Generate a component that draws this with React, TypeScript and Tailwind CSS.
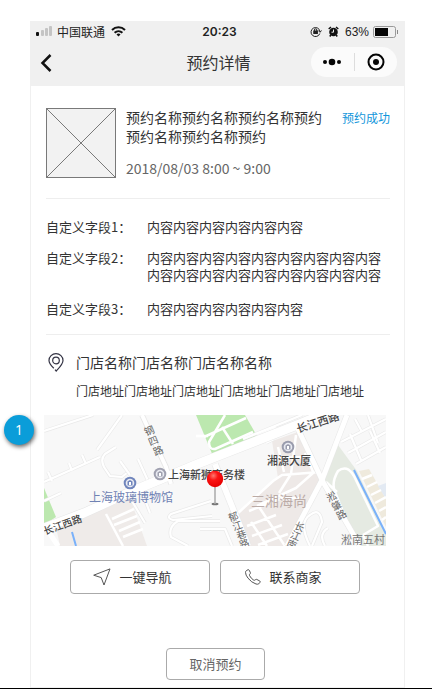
import type { ReactNode } from "react";

const fields = [
  { label: "自定义字段1：", value: "内容内容内容内容内容内容", space: "mb-3.5" },
  {
    label: "自定义字段2：",
    value: "内容内容内容内容内容内容内容内容内容内容内容内容内容内容内容内容内容内容",
    space: "mb-[17px]",
  },
  { label: "自定义字段3：", value: "内容内容内容内容内容内容", space: "" },
];

function StatusBar() {
  return (
    <div className="grid h-[21px] grid-cols-3 items-center pl-1.5 pr-1.5 text-xs text-[#222]">
      <div className="flex items-center">
        <svg className="mr-1 shrink-0" width="17" height="11" viewBox="0 0 17 11" aria-hidden="true">
          <rect x="0" y="6" width="3" height="4" rx="1" fill="#111" />
          <rect x="5" y="4" width="3" height="6" rx="1" fill="#c4c4c4" />
          <rect x="9" y="2" width="3" height="8" rx="1" fill="#c4c4c4" />
          <rect x="13" y="0" width="3" height="10" rx="1" fill="#c4c4c4" />
        </svg>
        <span className="whitespace-nowrap">中国联通</span>
        <svg className="ml-1.5 shrink-0" width="15" height="11" viewBox="0 0 15 11" fill="none" stroke="#111" strokeWidth="2" aria-hidden="true">
          <path d="M1 4C4.600.400 10.400.400 14 4" />
          <path d="M3.600 6.700C5.800 4.600 9.200 4.600 11.400 6.700" />
          <path d="M5.500 8.400C6.600 7.300 8.400 7.300 9.500 8.400L7.500 10.500Z" fill="#111" stroke="none" />
        </svg>
      </div>
      <div className="pl-1 text-center font-['Inter',sans-serif] font-semibold">20:23</div>
      <div className="flex items-center justify-end font-['Liberation_Sans',sans-serif] whitespace-nowrap">
        <svg className="mr-1.5 shrink-0" width="12" height="11" viewBox="0 0 12 11" fill="none" stroke="#222" aria-hidden="true">
          <path d="M9.800 7.500A4.500 4.500 0 1 1 10 5.500M8.300 4.500L10 6.300L11.500 4.500" />
          <path d="M4.400 5V4A1.200 1.200 0 0 1 6.800 4V5" />
          <rect x="3.800" y="5" width="3.600" height="2.500" fill="#222" />
        </svg>
        <svg className="mr-1.5 shrink-0" width="11" height="11" viewBox="0 0 11 11" aria-hidden="true">
          <circle cx="5.500" cy="6" r="4.300" fill="#111" />
          <path d="M.700 3L3 1M10.300 3L8 1M2.800 9L1.800 10.500M8.200 9L9.200 10.500" stroke="#111" strokeWidth="1.500" />
          <path d="M5.500 3.500V6.200H3.500" stroke="#eee" fill="none" />
        </svg>
        <span>63%</span>
        <svg className="ml-1 shrink-0" width="26" height="12" viewBox="0 0 26 12" aria-hidden="true">
          <rect x="0.500" y="0.500" width="22" height="11" rx="2" fill="none" stroke="#999" />
          <rect x="2" y="2" width="13" height="8" fill="#050505" />
          <path d="M24.500 4V8" stroke="#888" />
        </svg>
      </div>
    </div>
  );
}

function NavBar() {
  return (
    <div className="grid h-11 grid-cols-3 items-center pl-2.5 pr-2">
      <button type="button" aria-label="返回" className="flex h-7 w-7 items-center">
        <svg width="12" height="20" viewBox="0 0 12 20" fill="none" stroke="#111" strokeWidth="2.500" aria-hidden="true">
          <path d="M10.500 1L2.500 9L10.500 17" />
        </svg>
      </button>
      <h1 className="pb-1 text-center text-base text-[#333]">预约详情</h1>
      <div className="mb-1 flex h-[30px] w-[86px] items-center justify-self-end rounded-full bg-[#fbfbfb]">
        <button type="button" aria-label="更多" className="flex flex-1 justify-center">
          <svg width="20" height="8" viewBox="0 0 20 8" fill="#050505" aria-hidden="true">
            <circle cx="3" cy="4" r="2" />
            <circle cx="10" cy="4" r="3.300" />
            <circle cx="17" cy="4" r="2" />
          </svg>
        </button>
        <span className="h-[18px] w-px bg-[#ddd]" />
        <button type="button" aria-label="关闭" className="flex flex-1 justify-center">
          <svg width="18" height="18" viewBox="0 0 18 18" aria-hidden="true">
            <circle cx="9" cy="9" r="7.500" fill="none" stroke="#050505" strokeWidth="2" />
            <circle cx="9" cy="9" r="3" fill="#050505" />
          </svg>
        </button>
      </div>
    </div>
  );
}

function MinorRoads({ children }: { children: string }) {
  return (
    <>
      <path d={children} stroke="#e9e9e9" strokeWidth="3.500" />
      <path d={children} stroke="#fff" strokeWidth="2.200" />
    </>
  );
}

function Poi({ x, y, color }: { x: number; y: number; color: string }) {
  return (
    <g>
      <circle cx={x} cy={y} r="6.300" fill={color} />
      <circle cx={x} cy={y} r="4.300" fill="#e9ebf2" />
      <path d={`M${x - 2.5} ${y + 2.5}v-4l2.500-1.500l2.500 1.500v4z`} fill={color} />
      <path d={`M${x - 1} ${y + 2}v-3h2v3z`} fill="#fff" />
    </g>
  );
}

function Glyph({ x, y, turn, children }: { x: number; y: number; turn: number; children: ReactNode }) {
  return (
    <text x={x} y={y} fontSize="10" fill="#666" textAnchor="middle" dominantBaseline="central" transform={`rotate(${turn} ${x} ${y})`}>
      {children}
    </text>
  );
}

function StoreMap() {
  return (
    <svg
      className="block h-[131px] w-full"
      viewBox="0 0 342 131"
      preserveAspectRatio="xMidYMid slice"
      role="img"
      aria-label="门店地图"
      fill="none"
      strokeLinejoin="round"
    >
      <defs>
        <radialGradient id="pin" cx="0.400" cy="0.300" r="0.700">
          <stop offset="0" stopColor="#ff7a70" />
          <stop offset="0.400" stopColor="#fb1414" />
          <stop offset="1" stopColor="#e60000" />
        </radialGradient>
      </defs>
      <rect width="342" height="131" fill="#f8f8f8" />
      <path d="M152 0H201L213 21L169 41Z" fill="#bce8af" />
      <path d="M0 73L12 102L0 110Z" fill="#bce8af" />
      <path d="M12 112L60 94L86 83L103 131H16Z" fill="#efebe9" />
      <path d="M228 26L254 17L278 62L246 131H204L193 99L234 63Z" fill="#eee9e7" />
      <path d="M294 30L313 56L342 118V131H316L280 66Z" fill="#e5eae2" />
      <path d="M315 56L325 54L342 84V112Z" fill="#efeadd" />
      <path d="M334 71L342 68V84Z" fill="#e3eaf3" />

      <MinorRoads>M0 16L49 0M53 35L78 0</MinorRoads>
      <MinorRoads>M0 67L56 42M4 57L8 66M25 48L28 56M38 40L42 49</MinorRoads>
      <MinorRoads>M72 32L61 39Q56 44 60 52L66 61L78 62L84 57M0 86L17 78M94 44L105 68</MinorRoads>
      <MinorRoads>M85 81L101 108M98 77L106 98M76 46L86 60</MinorRoads>
      <MinorRoads>M167 86L127 99Q122 103 129 105L168 101M176 106H134Q124 112 127 122L144 131M156 114H181L188 131</MinorRoads>
      <MinorRoads>M199 24L258 0M213 21L232 13M222 28L230 24</MinorRoads>
      <MinorRoads>M266 131Q254 107 266 100Q276 92 278 107L268 131M281 131Q274 119 284 113</MinorRoads>
      <MinorRoads>M297 27L342 4M304 38L342 17M312 49L342 32M311 4L318 17M324 0L334 28M306 19L317 45M326 16L336 38</MinorRoads>
      <g stroke="#fff" strokeWidth="2.500">
        <path d="M181 0L165 27Q165 35 171 34L209 17M160 22L202 3M178 12L189 29M152 21H164" />
        <path d="M62 99L79 131M68 104L90 94M70 110L93 101M75 116L96 107M79 122L99 114" />
        <path d="M193 99L229 66L238 60L276 57M234 32L240 57M229 43L264 42M252 20L247 59L235 78M269 58L252 73L213 91M205 96L238 83L257 83M207 107L223 131M215 92L241 131M203 111L232 100M208 121L238 110M214 130L244 119M261 38L270 59" />
        <path d="M313 131L291 77Q287 68 294 56Q303 49 310 61L334 111L319 120M293 77L282 67M319 120L324 131" />
        <path d="M318 64L328 60M323 72L333 67M327 80L337 75M331 88L342 82M335 96L342 92M338 105L342 102" />
      </g>
      <g stroke="#e6e6e6">
        <path d="M98 0L122 52L127 69" strokeWidth="5.500" />
        <path d="M171 49L204 131" strokeWidth="7" />
        <path d="M303 0L278 65L243 131" strokeWidth="6" />
        <path d="M253 12L279 67L316 131" strokeWidth="6" />
        <path d="M0 113L40 98L86 77L156 48L253 10L282 -2" strokeWidth="10" />
      </g>
      <g stroke="#fff">
        <path d="M98 0L122 52L127 69" strokeWidth="4" />
        <path d="M0 110L14 131" strokeWidth="5" />
        <path d="M171 49L204 131" strokeWidth="6" />
        <path d="M303 0L278 65L243 131" strokeWidth="5" />
        <path d="M253 12L279 67L316 131" strokeWidth="5" />
        <path d="M0 113L40 98L86 77L156 48L253 10L282 -2" strokeWidth="9" />
      </g>
      <path d="M28 117L32 131M310 55L342 119" stroke="#79b1fa" strokeWidth="2" />

      <Poi x={86} y={68} color="#7085bc" />
      <Poi x={116} y={59} color="#a0a1b0" />
      <Poi x={244} y={32} color="#9a9cad" />

      <Glyph x={105} y={15} turn={-22}>钢</Glyph>
      <Glyph x={109} y={25} turn={-22}>四</Glyph>
      <Glyph x={114} y={35} turn={-22}>路</Glyph>
      <Glyph x={189} y={101} turn={-18}>郁</Glyph>
      <Glyph x={193} y={110} turn={-18}>江</Glyph>
      <Glyph x={197} y={119} turn={-18}>巷</Glyph>
      <Glyph x={200} y={128} turn={-18}>路</Glyph>
      <Glyph x={256} y={111} turn={24}>长</Glyph>
      <Glyph x={252} y={120} turn={24}>江</Glyph>
      <Glyph x={248} y={129} turn={24}>南</Glyph>
      <Glyph x={287} y={81} turn={-28}>淞</Glyph>
      <Glyph x={292} y={90} turn={-28}>肇</Glyph>
      <Glyph x={297} y={99} turn={-28}>路</Glyph>

      <g fontSize="11" fontWeight="500" fill="#444">
        <text x="1" y="120" fontSize="10" transform="rotate(-20 1 120)">长江西路</text>
        <text x="254" y="18" transform="rotate(-18 254 18)">长江西路</text>
        <text x="124" y="64">上海新狮商务楼</text>
        <text x="223" y="50">湘源大厦</text>
        <text x="45" y="87" fontSize="12" fontWeight="400" fill="#7082b4">上海玻璃博物馆</text>
        <text x="207" y="91" fontSize="14" fontWeight="400" fill="#bbaca7">三湘海尚</text>
        <text x="297" y="129" fontWeight="400" fill="#777">淞南五村</text>
      </g>

      <ellipse cx="171" cy="89" rx="3.500" ry="1.300" fill="#777" />
      <path d="M171 70V89" stroke="#aaa" strokeWidth="1.500" />
      <circle cx="171" cy="64" r="8.200" fill="url(#pin)" />
    </svg>
  );
}

export default function App() {
  return (
    <div className="border-b border-black bg-white pt-[21px] pr-[27px] pl-[30px] font-['Noto_Sans_CJK_SC',sans-serif] text-[#333]">
      <header className="bg-[#f0f0f0]">
        <StatusBar />
        <NavBar />
      </header>
      <main className="border-x border-b border-[#f0f0f0] px-[13px] pt-[22px] pb-[7px]">
        <section className="mr-px ml-0.5 flex items-start border-b border-[#eee] pb-5">
          <svg className="mr-2.5 shrink-0" width="70" height="70" viewBox="0 0 70 70" role="img" aria-label="预约图片">
            <rect x="0.500" y="0.500" width="69" height="69" fill="#f2f2f2" stroke="#797979" />
            <path d="M1 1L69 69M69 1L1 69" stroke="#797979" />
          </svg>
          <div className="min-w-0 flex-1">
            <h2 className="text-sm leading-[19px]">预约名称预约名称预约名称预约预约名称预约名称预约</h2>
            <p className="mt-[13px] text-sm leading-[19px] text-[#666]">2018/08/03 8:00 ~ 9:00</p>
          </div>
          <span className="ml-4 text-xs leading-[19px] whitespace-nowrap text-[#1296db]">预约成功</span>
        </section>

        <dl className="mr-px ml-0.5 border-b border-[#eee] pt-[19px] pb-[17px] text-[13px] leading-[17px]">
          {fields.map((f) => (
            <div key={f.label} className={`flex ${f.space}`}>
              <dt className="w-[101px] shrink-0 whitespace-nowrap">{f.label}</dt>
              <dd className="min-w-0 flex-1 pr-2">{f.value}</dd>
            </div>
          ))}
        </dl>

        <section className="mt-[17px] ml-0.5 flex">
          <svg className="mt-px ml-0.5 shrink-0" width="16" height="20" viewBox="0 0 16 20" fill="none" stroke="#333344" strokeWidth="1.200" aria-hidden="true">
            <path d="M5.800 15.200C3 12.500 1 10 1 7.400A7 6.700 0 0 1 15 7.400C15 11 11.500 14.300 8.200 18L7 16.600" />
            <circle cx="8" cy="7.500" r="3.300" />
          </svg>
          <div className="ml-3 flex-1">
            <h2 className="text-sm leading-5">门店名称门店名称门店名称名称</h2>
            <p className="mt-[9px] text-xs leading-5">门店地址门店地址门店地址门店地址门店地址门店地址</p>
          </div>
        </section>

        <div className="relative mt-[14px] mr-[5px]">
          <StoreMap />
          <span className="absolute top-0 -left-10 flex size-[30px] items-center justify-center rounded-full bg-[#0a9dd9] font-['Open_Sans',sans-serif] text-sm text-white shadow-[1px_2px_4px_rgba(0,0,0,0.6)]">
            1
          </span>
        </div>

        <div className="mt-3.5 mr-1.5 flex justify-center gap-2.5 text-[13px]">
          <button type="button" className="flex h-[34px] w-[140px] items-center rounded border border-[#aaa] pl-[22px]">
            <svg width="18" height="18" viewBox="0 0 18 18" fill="none" stroke="#555" strokeLinejoin="round" aria-hidden="true">
              <path d="M.700 7.200L17 .900L11 17L8.200 9.600Z" />
            </svg>
            <span className="ml-[9px]">一键导航</span>
          </button>
          <button type="button" className="flex h-[34px] w-[140px] items-center rounded border border-[#aaa] pl-6">
            <svg width="16" height="16" viewBox="0 0 16 16" fill="none" stroke="#555" strokeLinejoin="round" aria-hidden="true">
              <path d="M1.200 1.800L3 .700Q3.800.500 4.200 1.200L5.400 3.700Q5.600 4.500 4.700 5.200Q4.100 5.800 4.600 6.700Q6.200 9.700 8.800 11.200Q9.600 11.500 10.300 10.800Q11 10 11.700 10.400L14.800 12Q15.500 12.600 15 13.300L13.800 14.800Q13 15.500 11 15Q6.500 13.500 3 9.200Q.500 6 .500 3.300Q.500 2.300 1.200 1.800Z" />
            </svg>
            <span className="ml-[9px]">联系商家</span>
          </button>
        </div>

        <div className="mt-[54px] mr-1 flex justify-center">
          <button type="button" className="h-8 w-[99px] rounded border border-[#aaa] text-[13px] text-[#666]">
            取消预约
          </button>
        </div>
      </main>
    </div>
  );
}
